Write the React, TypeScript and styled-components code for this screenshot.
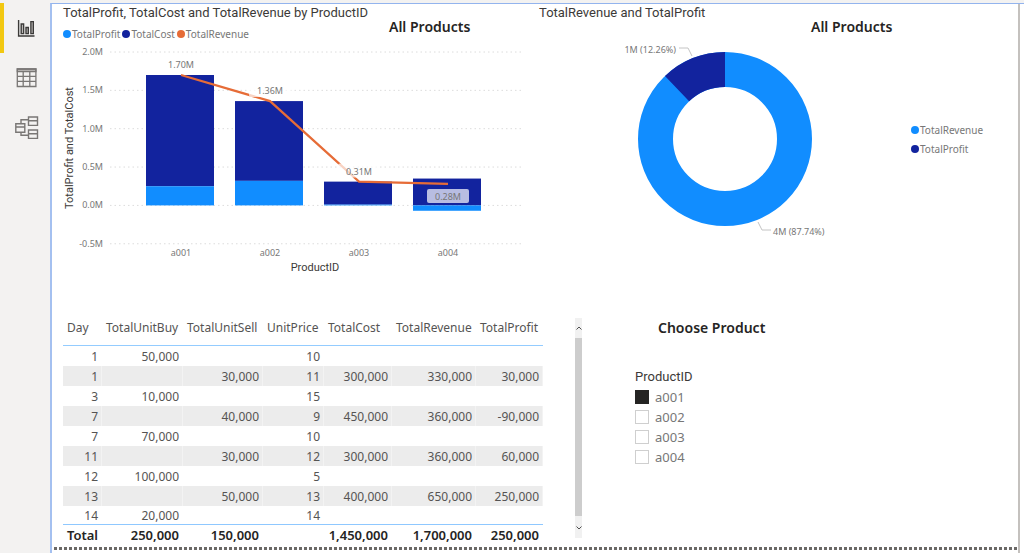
import React from "react";
import styled, { createGlobalStyle } from "styled-components";

const GlobalStyle = createGlobalStyle`
  * { box-sizing: border-box; }
  body {
    margin: 0;
    background: #f3f2f1;
    font-family: "Noto Sans", "Open Sans", sans-serif;
    color: #605e5c;
  }
`;

const titleFont = `Roboto, "Liberation Sans", sans-serif`;

const colors = {
  sky: "#118dff",
  navy: "#12239e",
  orange: "#e66c37",
  label: "#777777",
  title: "#3c3a38",
  heading: "#252423",
};

const Page = styled.div`
  display: grid;
  grid-template-columns: 50px minmax(0, 1fr);
  min-height: 100vh;
  padding-top: 3px;
`;

const Sidebar = styled.nav`
  display: flex;
  flex-direction: column;
`;

const ViewButton = styled.button<{ $active?: boolean }>`
  display: flex;
  align-items: center;
  height: 50px;
  padding: 0 0 0 ${(p) => (p.$active ? 11 : 15)}px;
  border: 0;
  border-left: ${(p) => (p.$active ? "4px solid #f2c811" : "0")};
  background: transparent;
  color: ${(p) => (p.$active ? "#3b3a39" : "#797775")};
`;

const Workspace = styled.main`
  border-top: 1px solid #93b4ee;
  border-left: 2px solid #a4c0f0;
  background: #ffffff;
  padding-right: 4px;
`;

const Report = styled.div`
  display: flex;
  flex-direction: column;
  border-right: 2px solid #c4c1be;
  min-height: 100%;
`;

const ChartRow = styled.div`
  display: grid;
  grid-template-columns: minmax(0, 486fr) minmax(0, 480fr);
`;

const ChartPanel = styled.section`
  display: flex;
  flex-direction: column;
`;

const ChartHeader = styled.header<{ $indent: number; $columns: string }>`
  display: grid;
  grid-template-columns: ${(p) => p.$columns};
  height: 38px;
  padding-left: ${(p) => p.$indent}px;
`;

const ChartTitle = styled.h2`
  margin: 0;
  padding-top: 1px;
  font: 400 13px/16px ${titleFont};
  color: ${colors.title};
  white-space: nowrap;
`;

const Heading = styled.h3`
  margin: 0;
  padding-top: 13px;
  font-size: 14px;
  line-height: 20px;
  font-weight: 600;
  color: ${colors.heading};
  white-space: nowrap;
`;

const Legend = styled.ul<{ $vertical?: boolean }>`
  display: flex;
  flex-direction: ${(p) => (p.$vertical ? "column" : "row")};
  gap: ${(p) => (p.$vertical ? 5 : 2)}px;
  margin: 0;
  padding: ${(p) => (p.$vertical ? "0 0 42px" : "6px 0 0")};
  list-style: none;
`;

const LegendItem = styled.li<{ $color: string }>`
  display: flex;
  align-items: center;
  gap: 1px;
  font-size: 10px;
  line-height: 14px;
  color: ${colors.label};
  &::before {
    content: "";
    width: 8px;
    height: 8px;
    border-radius: 50%;
    background: ${(p) => p.$color};
  }
`;

const Drawing = styled.svg`
  display: block;
  width: 100%;
  height: auto;
`;

const AxisText = styled.text`
  font-size: 9px;
  fill: ${colors.label};
`;

const AxisTitle = styled.text`
  font: 400 11px ${titleFont};
  fill: ${colors.title};
  text-anchor: middle;
`;

const DonutBody = styled.div`
  display: grid;
  grid-template-columns: minmax(0, 373fr) minmax(0, 107fr);
  align-items: center;
`;

const DataRow = styled.div`
  display: grid;
  grid-template-columns: minmax(0, 530fr) minmax(0, 436fr);
  padding-top: 40px;
`;

const TablePanel = styled.section`
  display: flex;
  justify-content: space-between;
  padding-left: 11px;
`;

const Table = styled.table`
  width: 480px;
  table-layout: fixed;
  border-collapse: separate;
  border-spacing: 0;
  font-size: 12px;
  color: #555453;
`;

const Column = styled.col<{ $width: number }>`
  width: ${(p) => p.$width}px;
`;

const HeadCell = styled.th`
  height: 28px;
  padding: 0 0 8px 4px;
  border-bottom: 1px solid #94ccff;
  font-weight: 400;
  line-height: 16px;
  text-align: left;
  white-space: nowrap;
`;

const Cell = styled.td`
  height: 20px;
  padding: 2px 4px 0 0;
  line-height: 16px;
  text-align: right;
`;

const Row = styled.tr`
  &:nth-child(even) ${Cell} {
    background: #ececec;
    border-right: 1px solid #f3f3f3;
    padding-right: 3px;
  }
  &:last-child ${Cell} {
    height: 18px;
  }
`;

const TotalCell = styled(Cell)`
  padding-top: 1px;
  border-top: 1px solid #8fc8ff;
  font-size: 13px;
  font-weight: 600;
  color: ${colors.heading};
`;

const Scrollbar = styled.div`
  display: flex;
  flex-direction: column;
  width: 7px;
  height: 220px;
  background: #f1f1f1;
`;

const ScrollButton = styled.button`
  display: flex;
  align-items: center;
  justify-content: center;
  height: 20px;
  padding: 0;
  border: 0;
  background: transparent;
  color: #505050;
`;

const ScrollThumb = styled.div`
  flex: 1;
  margin-bottom: 2px;
  background: #cdcdcd;
`;

const SlicerPanel = styled.section`
  display: flex;
  flex-direction: column;
  padding-left: 53px;
`;

const SlicerHeading = styled(Heading)`
  padding: 0 0 0 23px;
`;

const Slicer = styled.fieldset`
  display: flex;
  flex-direction: column;
  margin: 30px 0 0;
  padding: 0;
  border: 0;
`;

const SlicerTitle = styled.legend`
  padding: 0 0 1px;
  font: 400 13px/18px ${titleFont};
  color: ${colors.title};
`;

const Option = styled.label`
  display: flex;
  align-items: center;
  gap: 6px;
  height: 20px;
  font-size: 13px;
  line-height: 20px;
  color: ${colors.label};
`;

const Checkbox = styled.input`
  appearance: none;
  width: 14px;
  height: 14px;
  margin: 0;
  border: 1px solid #cfcfcf;
  background: #ffffff;
  &:checked {
    border-color: #252423;
    background: #252423;
  }
`;

const PageEdge = styled.div`
  height: 3px;
  margin: 3px 0 0 2px;
  background: repeating-linear-gradient(90deg, #6b6967 0 3px, #ffffff 3px 5px);
`;

const products = [
  { id: "a001", profit: 0.25, cost: 1.45, revenue: 1.7 },
  { id: "a002", profit: 0.32, cost: 1.04, revenue: 1.36 },
  { id: "a003", profit: 0.01, cost: 0.3, revenue: 0.31 },
  { id: "a004", profit: -0.07, cost: 0.35, revenue: 0.28 },
];

const yAt = (v: number) => 163.4 - v * 76.7;
const xAt = (i: number) => 129 + i * 89;

function ComboChart() {
  const line = products.map((p, i) => `${xAt(i)},${yAt(p.revenue)}`).join(" ");
  return (
    <Drawing viewBox="0 0 486 236" role="img" aria-label="Profit, cost and revenue by product">
      {[2, 1.5, 1, 0.5, 0, -0.5].map((v) => (
        <g key={v}>
          <line x1="58" x2="470" y1={yAt(v)} y2={yAt(v)} stroke="#dcdcdc" strokeDasharray="1.5 3" />
          <AxisText x="51" y={yAt(v) + 3} textAnchor="end">{`${v.toFixed(1)}M`}</AxisText>
        </g>
      ))}
      {products.map((p, i) => {
        const top = p.profit > 0 ? p.profit + p.cost : p.cost;
        const split = Math.max(p.profit, 0);
        return (
          <g key={p.id}>
            <rect x={xAt(i) - 35} width="68" y={yAt(top)} height={yAt(split) - yAt(top)} fill={colors.navy} />
            <rect
              x={xAt(i) - 35}
              width="68"
              y={yAt(split)}
              height={Math.abs(p.profit) * 76.7}
              fill={colors.sky}
            />
            <AxisText x={xAt(i)} y="214" textAnchor="middle">{p.id}</AxisText>
          </g>
        );
      })}
      <polyline points={line} fill="none" stroke={colors.orange} strokeWidth="2.2" />
      {products.map((p, i) => {
        const below = p.profit < 0;
        const y = yAt(p.revenue) + (below ? 12 : -11);
        return (
          <g key={p.id}>
            <rect x={xAt(i) - 21} y={y - 7} width="42" height="14" rx="2" fill="#ffffff" fillOpacity="0.7" />
            <AxisText x={xAt(i)} y={y + 4} textAnchor="middle">{`${p.revenue.toFixed(2)}M`}</AxisText>
          </g>
        );
      })}
      <AxisTitle x="263" y="229">ProductID</AxisTitle>
      <AxisTitle transform="translate(21 106) rotate(-90)">TotalProfit and TotalCost</AxisTitle>
    </Drawing>
  );
}

function DonutChart() {
  const radius = 69.5;
  const length = 2 * Math.PI * radius;
  const share = 0.1226;
  return (
    <Drawing viewBox="0 0 373 236" role="img" aria-label="Revenue and profit shares">
      <g transform="translate(187 97) rotate(-90)" fill="none" strokeWidth="35">
        <circle r={radius} stroke={colors.sky} />
        <circle
          r={radius}
          stroke={colors.navy}
          strokeDasharray={`${length * share} ${length}`}
          strokeDashoffset={-length * (1 - share)}
        />
      </g>
      <path d="M141 6h9l4 8M220 180l4 8h9" fill="none" stroke="#c4c4c4" />
      <AxisText x="138" y="11" textAnchor="end">1M (12.26%)</AxisText>
      <AxisText x="235" y="193">4M (87.74%)</AxisText>
    </Drawing>
  );
}

const columns = [
  { name: "Day", width: 39 },
  { name: "TotalUnitBuy", width: 81 },
  { name: "TotalUnitSell", width: 80 },
  { name: "UnitPrice", width: 61 },
  { name: "TotalCost", width: 68 },
  { name: "TotalRevenue", width: 84 },
  { name: "TotalProfit", width: 67 },
];

const rows = [
  ["1", "50,000", "", "10", "", "", ""],
  ["1", "", "30,000", "11", "300,000", "330,000", "30,000"],
  ["3", "10,000", "", "15", "", "", ""],
  ["7", "", "40,000", "9", "450,000", "360,000", "-90,000"],
  ["7", "70,000", "", "10", "", "", ""],
  ["11", "", "30,000", "12", "300,000", "360,000", "60,000"],
  ["12", "100,000", "", "5", "", "", ""],
  ["13", "", "50,000", "13", "400,000", "650,000", "250,000"],
  ["14", "20,000", "", "14", "", "", ""],
];

const totals = ["Total", "250,000", "150,000", "", "1,450,000", "1,700,000", "250,000"];

function ReportIcon() {
  return (
    <svg width="22" height="22" viewBox="0 0 22 22" fill="none" stroke="currentColor" strokeWidth="1.4">
      <path d="M3.6 3v16H19.5" />
      <path d="M6.2 7h2.400v9.600H6.200zM11 10.500h2.300v6.100H11zM15.900 4.600h2.400v12h-2.400z" fill="#c8c6c4" />
    </svg>
  );
}

function DataIcon() {
  return (
    <svg width="22" height="22" viewBox="0 0 22 22" fill="none" stroke="currentColor" strokeWidth="1.3">
      <path d="M2.300 2h18.600v2.500H2.300z" fill="#c8c6c4" />
      <path d="M2.300 2h18.600v17.500H2.300zM2.300 9.300h18.600M2.300 14.300h18.600M8.200 4.500v15M14.800 4.500v15" />
    </svg>
  );
}

function ModelIcon() {
  return (
    <svg width="24" height="24" viewBox="0 0 24 24" fill="none" stroke="currentColor" strokeWidth="1.4">
      <path d="M.8 7.700h9v8.600h-9zM.8 11h9M13.500 1h9v8.400h-9zM13.500 4.700h9M13.500 14h9v8.400h-9zM13.500 17.700h9M6 7.700v-4h7.500M6 16.300v3h7.500" />
    </svg>
  );
}

export default function App() {
  return (
    <>
      <GlobalStyle />
      <Page>
        <Sidebar aria-label="Views">
          <ViewButton $active aria-label="Report view"><ReportIcon /></ViewButton>
          <ViewButton aria-label="Data view"><DataIcon /></ViewButton>
          <ViewButton aria-label="Model view"><ModelIcon /></ViewButton>
        </Sidebar>
        <Workspace>
          <Report>
            <ChartRow>
              <ChartPanel>
                <ChartHeader $indent={11} $columns="minmax(0, 326fr) minmax(0, 149fr)">
                  <div>
                    <ChartTitle>TotalProfit, TotalCost and TotalRevenue by ProductID</ChartTitle>
                    <Legend>
                      <LegendItem $color={colors.sky}>TotalProfit</LegendItem>
                      <LegendItem $color={colors.navy}>TotalCost</LegendItem>
                      <LegendItem $color={colors.orange}>TotalRevenue</LegendItem>
                    </Legend>
                  </div>
                  <Heading>All Products</Heading>
                </ChartHeader>
                <ComboChart />
              </ChartPanel>
              <ChartPanel>
                <ChartHeader $indent={1} $columns="minmax(0, 272fr) minmax(0, 207fr)">
                  <ChartTitle>TotalRevenue and TotalProfit</ChartTitle>
                  <Heading>All Products</Heading>
                </ChartHeader>
                <DonutBody>
                  <DonutChart />
                  <Legend $vertical>
                    <LegendItem $color={colors.sky}>TotalRevenue</LegendItem>
                    <LegendItem $color={colors.navy}>TotalProfit</LegendItem>
                  </Legend>
                </DonutBody>
              </ChartPanel>
            </ChartRow>
            <DataRow>
              <TablePanel>
                <Table>
                  <colgroup>
                    {columns.map((c) => <Column key={c.name} $width={c.width} />)}
                  </colgroup>
                  <thead>
                    <tr>{columns.map((c) => <HeadCell key={c.name} scope="col">{c.name}</HeadCell>)}</tr>
                  </thead>
                  <tbody>
                    {rows.map((row, r) => (
                      <Row key={r}>{row.map((value, c) => <Cell key={c}>{value}</Cell>)}</Row>
                    ))}
                  </tbody>
                  <tfoot>
                    <tr>{totals.map((value, c) => <TotalCell key={c}>{value}</TotalCell>)}</tr>
                  </tfoot>
                </Table>
                <Scrollbar>
                  <ScrollButton aria-label="Scroll up">
                    <svg width="6" height="4" viewBox="0 0 6 4" fill="none" stroke="currentColor"><path d="M.5 3.500 3 1l2.500 2.500" /></svg>
                  </ScrollButton>
                  <ScrollThumb />
                  <ScrollButton aria-label="Scroll down">
                    <svg width="6" height="4" viewBox="0 0 6 4" fill="none" stroke="currentColor"><path d="M.5.5 3 3 5.500.5" /></svg>
                  </ScrollButton>
                </Scrollbar>
              </TablePanel>
              <SlicerPanel>
                <SlicerHeading>Choose Product</SlicerHeading>
                <Slicer>
                  <SlicerTitle>ProductID</SlicerTitle>
                  {products.map((p, i) => (
                    <Option key={p.id}>
                      <Checkbox type="checkbox" defaultChecked={i === 0} />
                      {p.id}
                    </Option>
                  ))}
                </Slicer>
              </SlicerPanel>
            </DataRow>
            <PageEdge />
          </Report>
        </Workspace>
      </Page>
    </>
  );
}
